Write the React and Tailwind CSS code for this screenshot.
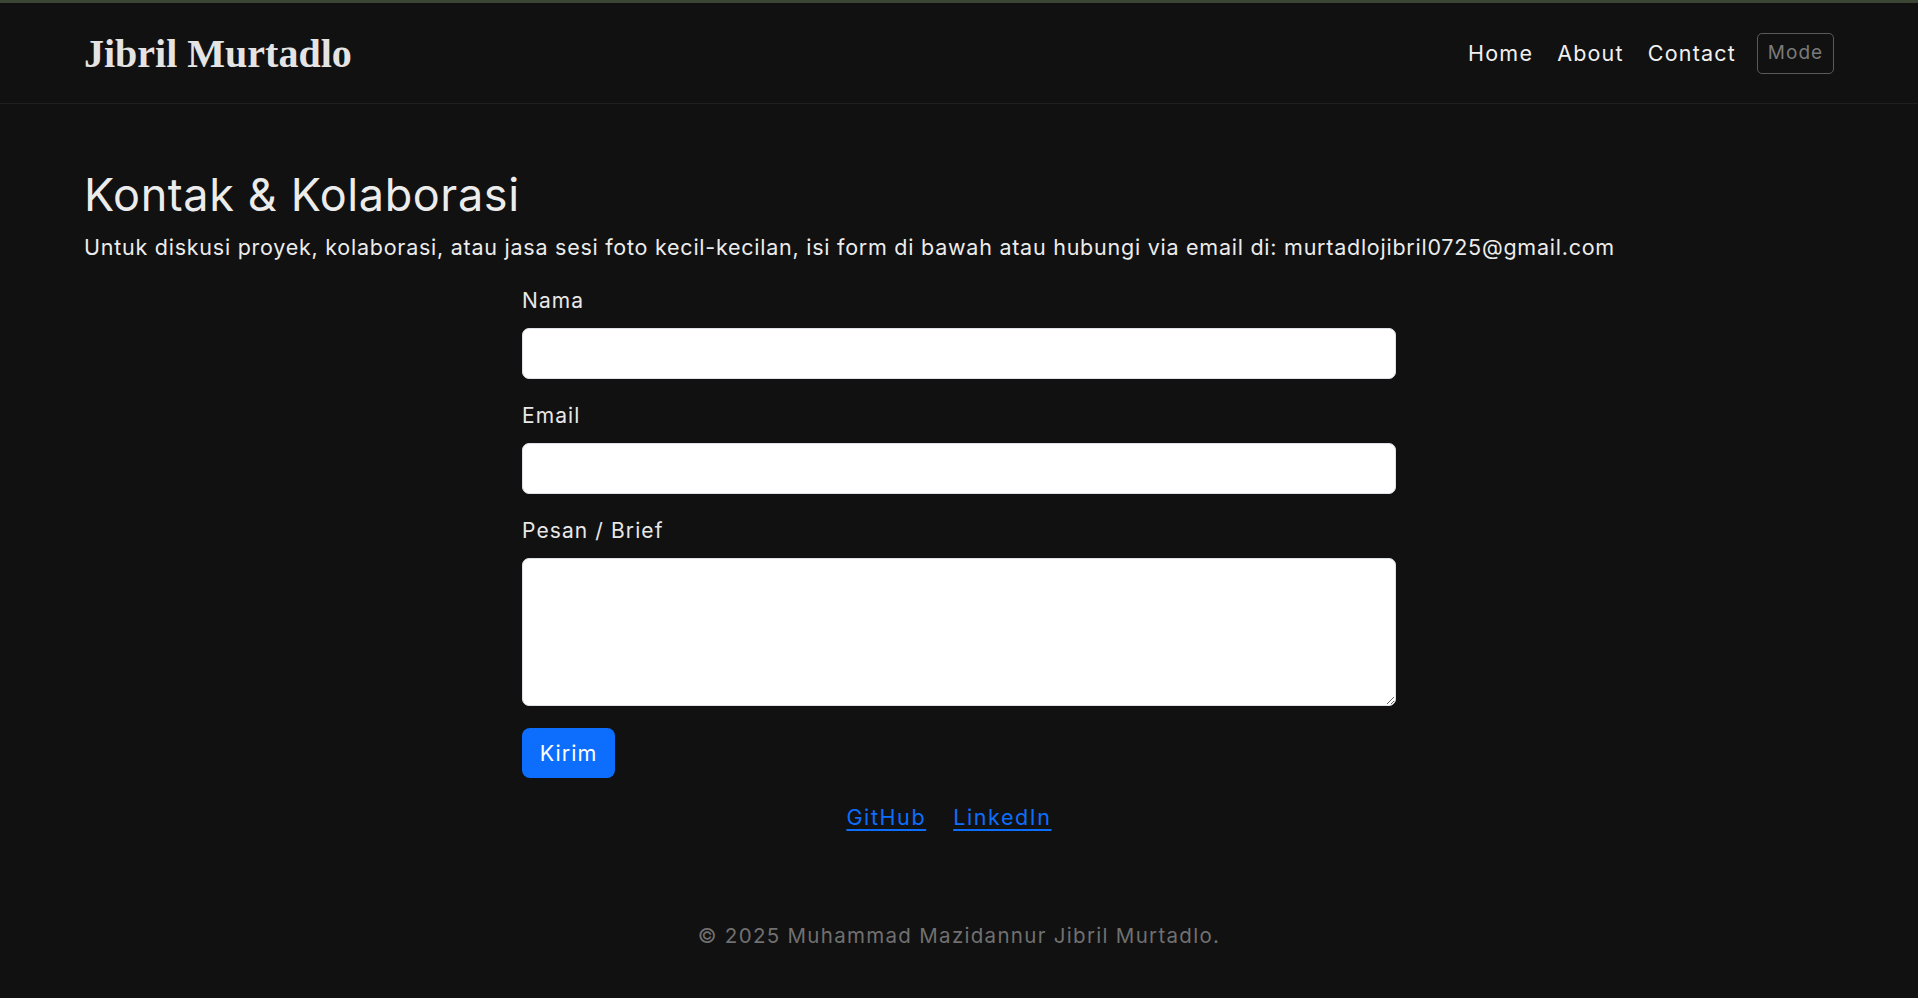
function Field({ label, children }) {
    return (
        <div>
            <label className="block text-[21px] leading-[30px] tracking-[1.1px] text-[#e8e8e8] mb-[12px]">{label}</label>
            {children}
        </div>
    );
}

export default function App() {
    return (
        <div className="min-h-[998px] bg-[#111111] border-t-[3px] border-[#3b4635] flex flex-col font-['Inter',sans-serif]">
            {/* Navbar */}
            <header className="h-[101px] border-b border-[#1f1f1f] px-[84px] flex items-center justify-between">
                <a className="font-['Liberation_Serif',serif] font-bold text-[40px] leading-none text-[#e4e4e4] mt-[2px]">
                    Jibril Murtadlo
                </a>
                <nav className="flex items-center tracking-[1.2px]">
                    <a className="text-[21.5px] text-[#f0f0f0] mr-[24px]">Home</a>
                    <a className="text-[21.5px] text-[#f0f0f0] mr-[24px]">About</a>
                    <a className="text-[21.5px] text-[#f0f0f0] mr-[21px]">Contact</a>
                    <button className="w-[77px] h-[41px] border border-[#5a5a5a] rounded-[5px] text-[19px] tracking-[1px] text-[#7a7a7a]">
                        Mode
                    </button>
                </nav>
            </header>

            {/* Main */}
            <main className="px-[84px] pt-[63px]">
                <h1 className="text-[45px] leading-[56px] tracking-[0.6px] text-[#ececec]">Kontak &amp; Kolaborasi</h1>
                <p className="text-[21.5px] leading-[30px] tracking-[0.75px] text-[#ececec] mt-[9px]">
                    Untuk diskusi proyek, kolaborasi, atau jasa sesi foto kecil-kecilan, isi form di bawah atau hubungi via email di: murtadlojibril0725@gmail.com
                </p>

                <form className="w-[874px] mx-auto mt-[24px] flex flex-col gap-[22px]" onSubmit={(e) => e.preventDefault()}>
                    <Field label="Nama">
                        <input className="block w-full h-[51px] bg-white rounded-[7px] border border-[#dee2e6] px-4 text-[20px] outline-none" />
                    </Field>
                    <Field label="Email">
                        <input type="email" className="block w-full h-[51px] bg-white rounded-[7px] border border-[#dee2e6] px-4 text-[20px] outline-none" />
                    </Field>
                    <Field label="Pesan / Brief">
                        <textarea className="block w-full h-[148px] bg-white rounded-[7px] border border-[#dee2e6] px-4 py-2 text-[20px] outline-none" />
                    </Field>
                    <div>
                        <button className="w-[93px] h-[50px] bg-[#0d6efd] rounded-[8px] text-white text-[21.5px] tracking-[1px]">Kirim</button>
                    </div>
                </form>

                <div className="flex justify-center gap-[27px] mt-[24px] pr-[20px] text-[21.5px] leading-[30px] tracking-[1.6px]">
                    <a href="#" className="text-[#0d6efd] underline underline-offset-[4px]">GitHub</a>
                    <a href="#" className="text-[#0d6efd] underline underline-offset-[4px]">LinkedIn</a>
                </div>
            </main>

            {/* Footer */}
            <footer className="mt-[89px] text-center text-[20.5px] leading-[30px] tracking-[1.3px] text-[#707070]">
                © 2025 Muhammad Mazidannur Jibril Murtadlo.
            </footer>
        </div>
    );
}
